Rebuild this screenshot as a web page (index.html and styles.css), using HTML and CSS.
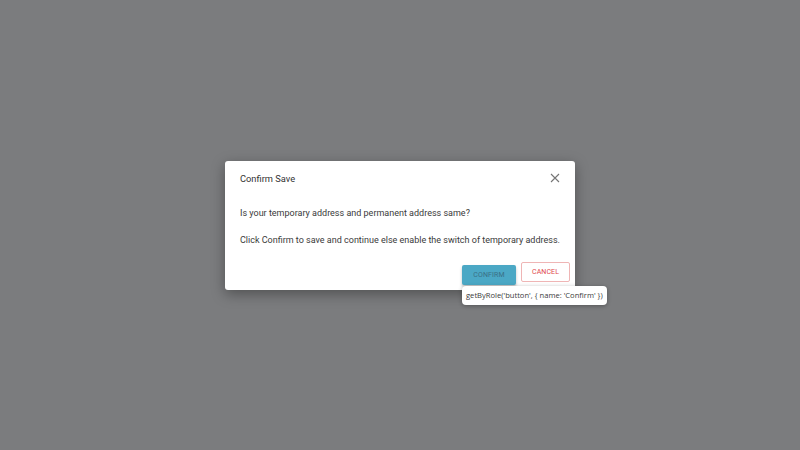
FILE: index.html
```html
<!DOCTYPE html>
<html>
<head>
<meta charset="utf-8">
<link rel="stylesheet" href="styles.css">
</head>
<body>
<div class="backdrop">
  <div class="dialog" role="dialog">
    <div class="dialog-header">
      <span class="dialog-title">Confirm Save</span>
      <button class="close-btn" aria-label="Close">
        <svg width="10" height="10" viewBox="0 0 10 10"><path d="M1 1L9 9M9 1L1 9" stroke="#757575" stroke-width="1.1" fill="none"/></svg>
      </button>
    </div>
    <div class="dialog-body">
      <p>Is your temporary address and permanent address same?</p>
      <p>Click Confirm to save and continue else enable the switch of temporary address.</p>
    </div>
    <div class="dialog-footer">
      <div class="confirm-wrap">
        <button class="btn btn-confirm">CONFIRM</button>
        <div class="tooltip">getByRole('button', { name: 'Confirm' })</div>
      </div>
      <button class="btn btn-cancel">CANCEL</button>
    </div>
  </div>
</div>
</body>
</html>
```
FILE: styles.css
```css
html, body {
  margin: 0;
  padding: 0;
  height: 100%;
}
body {
  font-family: Roboto, "Liberation Sans", sans-serif;
  background: #7b7c7e;
}
.backdrop {
  height: 100%;
  display: flex;
  align-items: center;
  justify-content: center;
}
.dialog {
  width: 350px;
  height: 129px;
  background: #fff;
  border-radius: 3px;
  box-shadow: 0 4px 14px rgba(0,0,0,0.35);
  display: flex;
  flex-direction: column;
  box-sizing: border-box;
}
.dialog-header {
  height: 35px;
  display: flex;
  align-items: center;
  justify-content: space-between;
  padding: 0 14px 0 15px;
}
.dialog-title {
  font-size: 9.3px;
  color: #333;
}
.close-btn {
  border: none;
  background: none;
  padding: 0;
  width: 12px;
  height: 12px;
  display: flex;
  align-items: center;
  justify-content: center;
}
.dialog-body {
  padding: 12px 15px 0 15px;
  font-size: 9px;
  color: #3a3a3a;
}
.dialog-body p {
  margin: 0 0 16px 0;
  line-height: 11px;
}
.dialog-footer {
  margin-top: auto;
  display: flex;
  justify-content: flex-end;
  gap: 5px;
  padding: 0 5px 5px 0;
}
.confirm-wrap {
  position: relative;
}
.btn {
  font-family: Roboto, "Liberation Sans", sans-serif;
  font-size: 7px;
  height: 20px;
  border-radius: 2px;
  box-sizing: border-box;
  padding: 0;
  letter-spacing: 0.1px;
}
.btn-confirm {
  width: 54px;
  background: #4ba8c5;
  color: #3a6f85;
  border: none;
  box-shadow: 0 2px 3px rgba(0,0,0,0.25);
}
.btn-cancel {
  width: 49px;
  background: #fff;
  color: #e0474c;
  border: 1px solid #efb5b5;
}
.tooltip {
  position: absolute;
  top: 24px;
  left: 0;
  white-space: nowrap;
  background: #fff;
  color: #3a3a3a;
  font-family: "Open Sans", "Liberation Sans", sans-serif;
  font-size: 7.6px;
  padding: 0 4px;
  height: 19px;
  line-height: 19px;
  border-radius: 4px;
  box-shadow: 0 1px 4px rgba(0,0,0,0.3);
}
```
